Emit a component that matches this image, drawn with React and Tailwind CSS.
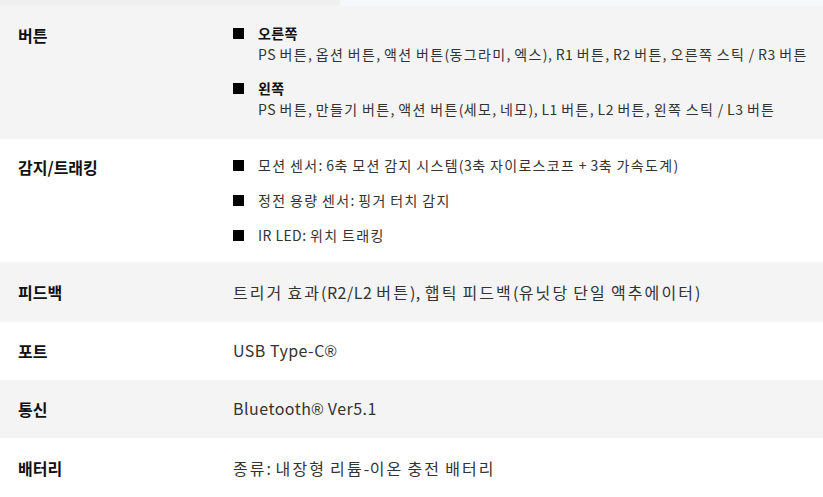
import React from 'react'

const font = { fontFamily: '"Noto Sans CJK KR", "Noto Sans", sans-serif' }

// hangul runs get wider spacing than latin, to get close to the original widths
const K = ({ text, wide }) => {
    const parts = text.split(/([\uAC00-\uD7A3]+)/)
    return parts.map((p, i) =>
        /[\uAC00-\uD7A3]/.test(p)
            ? <span key={i} className={wide ? "tracking-[0.13em]" : "tracking-[0.095em]"}>{p}</span>
            : <span key={i} className="tracking-[0.03em]">{p}</span>
    )
}

const Reg = () => <span style={{ fontFamily: '"Liberation Sans", sans-serif' }}>®</span>

const Bullet = ({ children, bold }) => (
    <div className="flex items-center h-[21px]">
        <span className="w-[11px] h-[11px] bg-black mr-[14px] shrink-0" />
        <span className={bold ? "text-[14px] font-bold text-[#111] tracking-[0.03em]" : "text-[14px] text-[#333] whitespace-nowrap"}>
            {bold ? children : <K text={children} />}
        </span>
    </div>
)

const SimpleRow = ({ label, value, gray, h }) => (
    <div className={`flex items-center ${h} ${gray ? "bg-[#f4f4f4]" : "bg-white"}`}>
        <div className="w-[233px] pl-[18px] text-[16px] font-bold text-[#111]">{label}</div>
        <div className="text-[16px] text-[#333] whitespace-nowrap">{value}</div>
    </div>
)

const App = () => {
    return (
        <div className="w-[823px] h-[497px] overflow-hidden bg-white" style={font}>
            <div className="h-[6px] bg-[#f7f8fb]">
                <div className="h-full w-[340px] bg-gradient-to-b from-[#eeeeee] to-[#f2f2f2]" />
            </div>

            <div className="flex h-[133px] bg-[#f4f4f4] pt-[17px]">
                <div className="w-[233px] pl-[18px] text-[16px] font-bold text-[#111] leading-[24px]">버튼</div>
                <div className="flex flex-col gap-[13px]">
                    <div>
                        <Bullet bold>오른쪽</Bullet>
                        <div className="pl-[25px] text-[14px] leading-[21px] text-[#333] whitespace-nowrap">
                            <K text="PS 버튼, 옵션 버튼, 액션 버튼(동그라미, 엑스), R1 버튼, R2 버튼, 오른쪽 스틱 / R3 버튼" />
                        </div>
                    </div>
                    <div>
                        <Bullet bold>왼쪽</Bullet>
                        <div className="pl-[25px] text-[14px] leading-[21px] text-[#333] whitespace-nowrap">
                            <K text="PS 버튼, 만들기 버튼, 액션 버튼(세모, 네모), L1 버튼, L2 버튼, 왼쪽 스틱 / L3 버튼" />
                        </div>
                    </div>
                </div>
            </div>

            <div className="flex h-[123px] bg-white pt-[16px]">
                <div className="w-[233px] pl-[18px] text-[16px] font-bold text-[#111] leading-[24px]">감지/트래킹</div>
                <div className="flex flex-col gap-[14px]">
                    <Bullet>모션 센서: 6축 모션 감지 시스템(3축 자이로스코프 + 3축 가속도계)</Bullet>
                    <Bullet>정전 용량 센서: 핑거 터치 감지</Bullet>
                    <Bullet>IR LED: 위치 트래킹</Bullet>
                </div>
            </div>

            <SimpleRow gray h="h-[60px]" label="피드백" value={<K wide text="트리거 효과(R2/L2 버튼), 햅틱 피드백(유닛당 단일 액추에이터)" />} />
            <SimpleRow h="h-[58px]" label="포트" value={<span className="tracking-[0.03em]">USB Type-C<Reg /></span>} />
            <SimpleRow gray h="h-[58px]" label="통신" value={<span className="tracking-[0.03em]">Bluetooth<Reg /> Ver5.1</span>} />
            <SimpleRow h="h-[59px]" label="배터리" value={<K wide text="종류: 내장형 리튬-이온 충전 배터리" />} />
        </div>
    )
}

export default App
